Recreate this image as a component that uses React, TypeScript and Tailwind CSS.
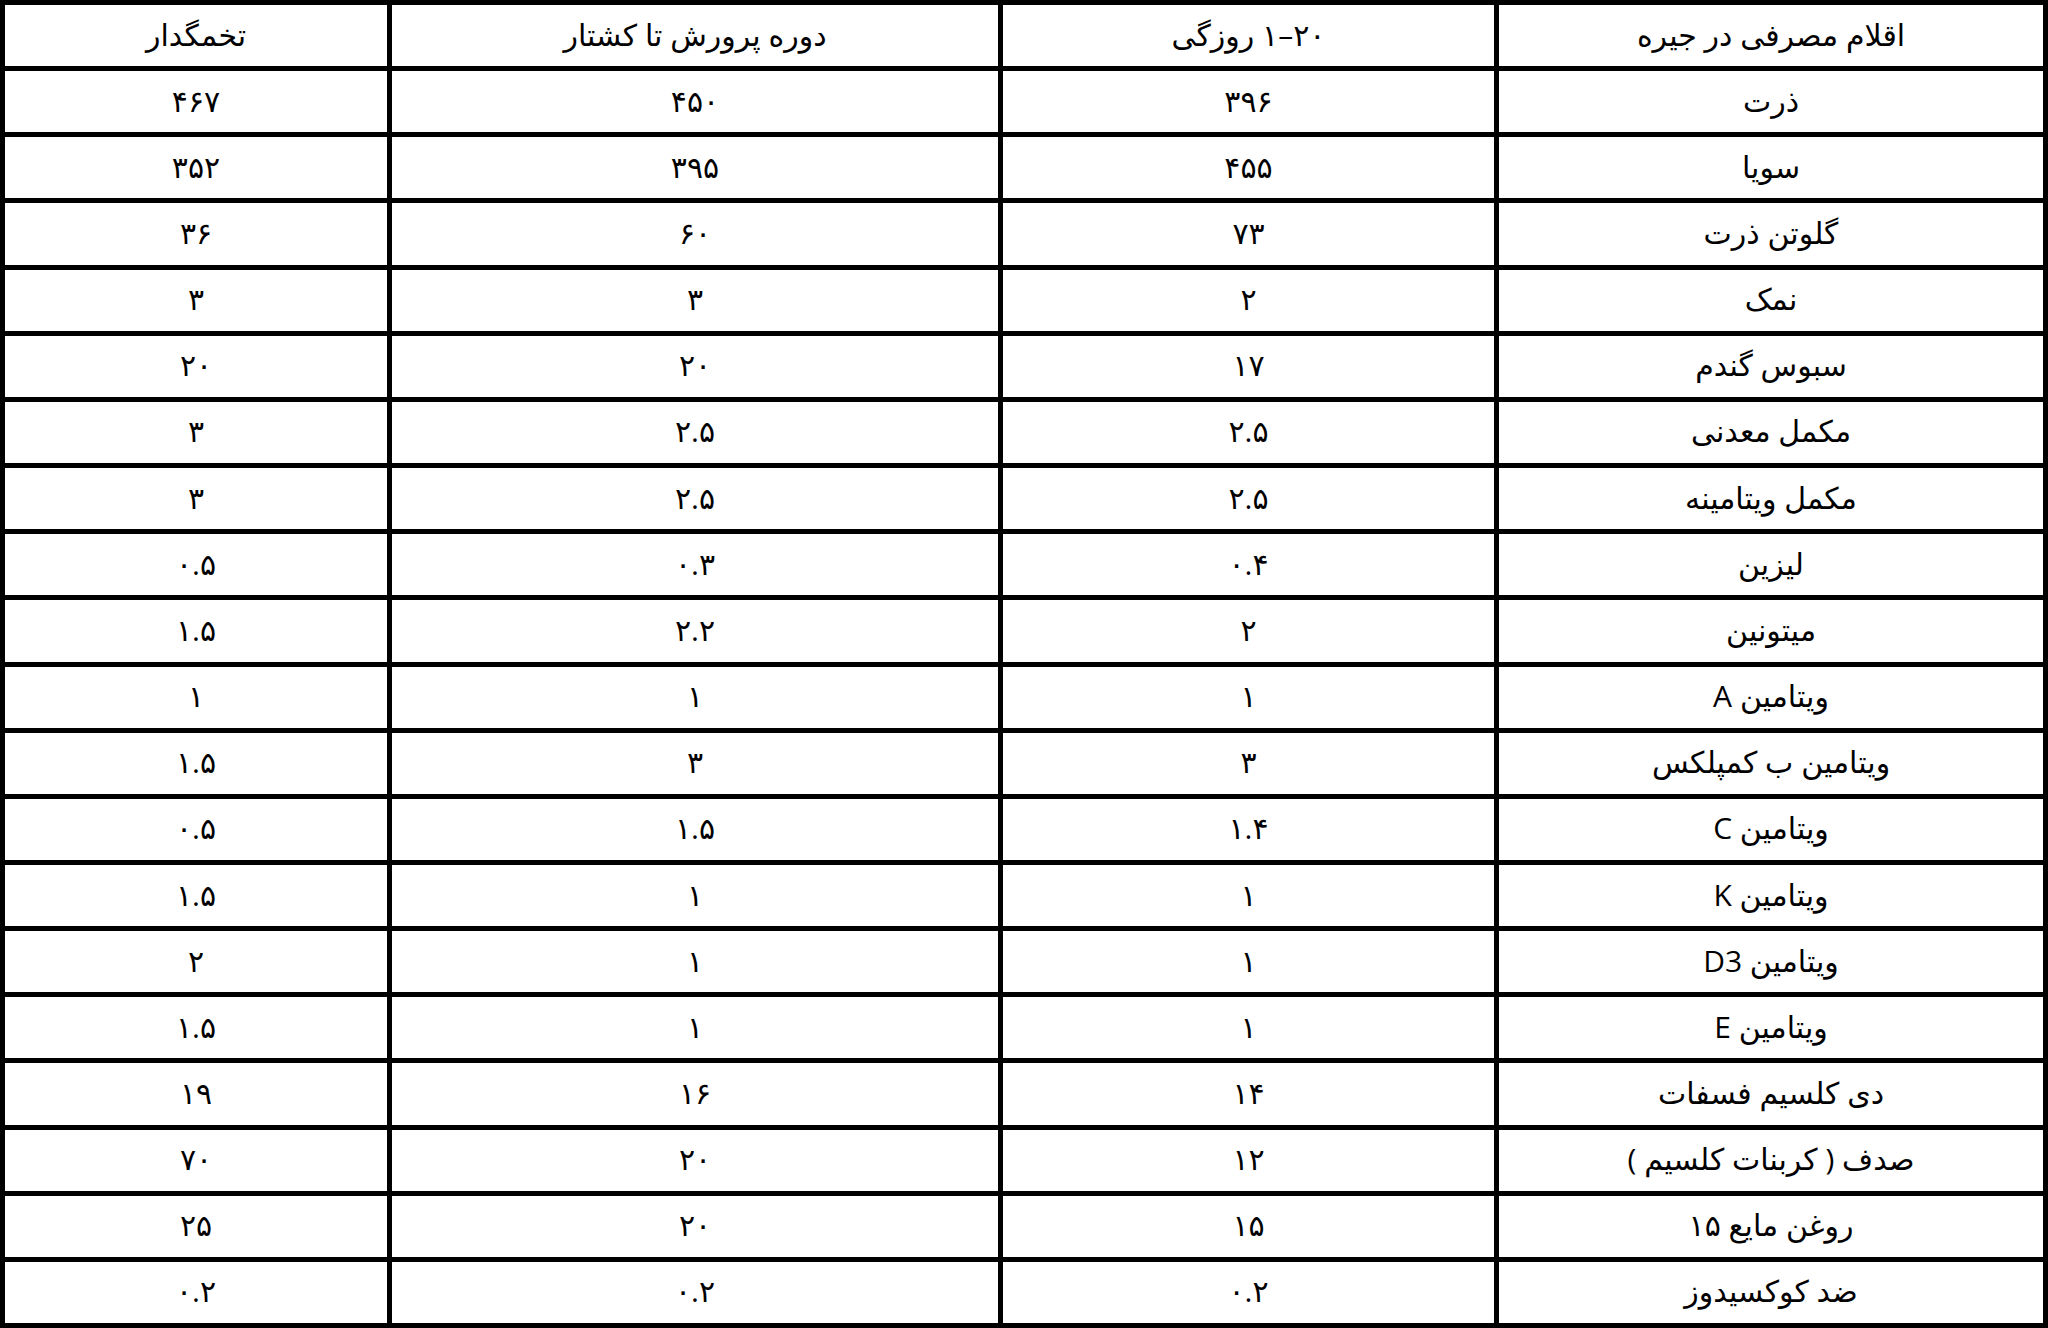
import React from "react";

const HEADERS = ["اقلام مصرفی در جیره", "۲۰–۱ روزگی", "دوره پرورش تا کشتار", "تخمگدار"];

const ROWS: string[][] = [
  ["ذرت", "۳۹۶", "۴۵۰", "۴۶۷"],
  ["سویا", "۴۵۵", "۳۹۵", "۳۵۲"],
  ["گلوتن ذرت", "۷۳", "۶۰", "۳۶"],
  ["نمک", "۲", "۳", "۳"],
  ["سبوس گندم", "۱۷", "۲۰", "۲۰"],
  ["مکمل معدنی", "۲.۵", "۲.۵", "۳"],
  ["مکمل ویتامینه", "۲.۵", "۲.۵", "۳"],
  ["لیزین", "۰.۴", "۰.۳", "۰.۵"],
  ["میتونین", "۲", "۲.۲", "۱.۵"],
  ["ویتامین A", "۱", "۱", "۱"],
  ["ویتامین ب کمپلکس", "۳", "۳", "۱.۵"],
  ["ویتامین C", "۱.۴", "۱.۵", "۰.۵"],
  ["ویتامین K", "۱", "۱", "۱.۵"],
  ["ویتامین D3", "۱", "۱", "۲"],
  ["ویتامین E", "۱", "۱", "۱.۵"],
  ["دی کلسیم فسفات", "۱۴", "۱۶", "۱۹"],
  ["صدف ( کربنات کلسیم )", "۱۲", "۲۰", "۷۰"],
  ["روغن مایع ۱۵", "۱۵", "۲۰", "۲۵"],
  ["ضد کوکسیدوز", "۰.۲", "۰.۲", "۰.۲"],
];

const Cell = ({ text }: { text: string }) => (
  <div className="bg-white flex items-center justify-center text-black text-[30px] leading-none pb-[2px]">
    {text}
  </div>
);

export default function App() {
  return (
    <div
      dir="rtl"
      lang="fa"
      className="w-[2048px] h-[1328px] bg-black p-[5px] grid grid-cols-[544px_491px_606px_382px] grid-rows-[repeat(20,minmax(0,1fr))] gap-[5px]"
      style={{ fontFamily: '"Open Sans", "DejaVu Sans", sans-serif' }}
    >
      {HEADERS.map((h) => (
        <Cell key={h} text={h} />
      ))}
      {ROWS.map((row, i) =>
        row.map((c, j) => <Cell key={`${i}-${j}`} text={c} />)
      )}
    </div>
  );
}
